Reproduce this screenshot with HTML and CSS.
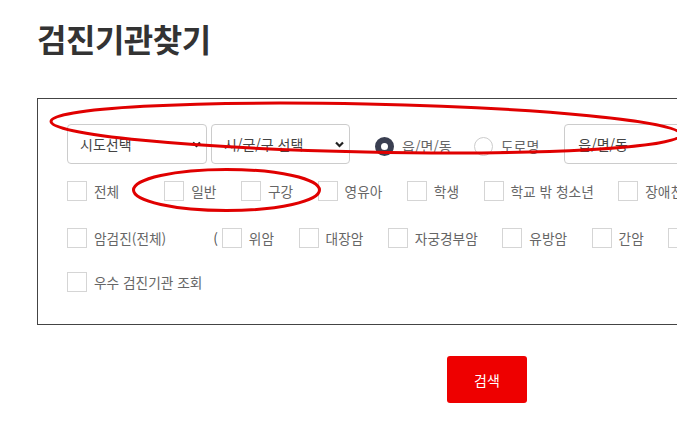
FILE: index.html
```html
<!DOCTYPE html>
<html lang="ko">
<head>
    <meta charset="UTF-8">
    <meta name="viewport" content="width=device-width, initial-scale=1.0">
    <title>검진기관찾기</title>
    <link rel="stylesheet" href="styles.css">
</head>
<body>
    <div class="page">
        <h2 class="page-title">검진기관찾기</h2>

        <div class="search-box">
            <div class="addr-row">
                <select class="addr-select">
                    <option>시도선택</option>
                </select>
                <select class="addr-select">
                    <option>시/군/구 선택</option>
                </select>
                <label class="radio-item">
                    <input type="radio" name="addrType" checked>
                    <span class="radio-mark"></span>
                    읍/면/동
                </label>
                <label class="radio-item">
                    <input type="radio" name="addrType">
                    <span class="radio-mark"></span>
                    도로명
                </label>
                <input type="text" class="addr-input" placeholder="읍/면/동">
            </div>

            <div class="check-row">
                <label class="check-item first"><span class="box"></span>전체</label>
                <label class="check-item"><span class="box"></span>일반</label>
                <label class="check-item"><span class="box"></span>구강</label>
                <label class="check-item"><span class="box"></span>영유아</label>
                <label class="check-item"><span class="box"></span>학생</label>
                <label class="check-item"><span class="box"></span>학교 밖 청소년</label>
                <label class="check-item"><span class="box"></span>장애친화</label>
            </div>

            <div class="check-row">
                <label class="check-item first cancer"><span class="box"></span>암검진(전체)</label>
                <span class="paren">(</span>
                <label class="check-item"><span class="box"></span>위암</label>
                <label class="check-item"><span class="box"></span>대장암</label>
                <label class="check-item"><span class="box"></span>자궁경부암</label>
                <label class="check-item"><span class="box"></span>유방암</label>
                <label class="check-item"><span class="box"></span>간암</label>
                <label class="check-item"><span class="box"></span>폐암</label>
            </div>

            <div class="check-row">
                <label class="check-item"><span class="box"></span>우수 검진기관 조회</label>
            </div>
        </div>

        <div class="btn-container">
            <button class="btn-search">검색</button>
        </div>
    </div>

    <!-- red marks drawn over the screenshot -->
    <svg class="marks" width="677" height="424" viewBox="0 0 677 424">
        <ellipse cx="366" cy="128" rx="315" ry="24" transform="rotate(1.2 366 128)" />
        <ellipse cx="226.5" cy="190" rx="93" ry="20.5" />
    </svg>
</body>
</html>
```

FILE: styles.css
```css
/* Base Styling */
html, body {
    margin: 0;
    padding: 0;
    overflow: hidden;
}

body {
    font-family: "Noto Sans CJK KR", "Noto Sans", sans-serif;
    background-color: #fff;
    color: #555;
    width: 677px;
    height: 424px;
    position: relative;
}

.page {
    width: 900px;
    padding-left: 37px;
}

.page-title {
    margin: 0;
    padding-top: 17px;
    height: 98px;
    box-sizing: border-box;
    font-size: 32px;
    font-weight: bold;
    line-height: 42px;
    color: #333;
    letter-spacing: -0.5px;
}

.search-box {
    border: 1px solid #444;
    padding: 25px 30px 32px 29px;
    height: 227px;
    box-sizing: border-box;
}

/* address row */
.addr-row {
    display: flex;
    align-items: center;
    height: 40px;
    white-space: nowrap;
}

.addr-select {
    appearance: none;
    width: 140px;
    height: 40px;
    margin-right: 4px;
    padding: 0 12px;
    border: 1px solid #ccc;
    border-radius: 4px;
    background-color: #fff;
    background-image: url("data:image/svg+xml;utf8,<svg xmlns='http://www.w3.org/2000/svg' width='9' height='7' viewBox='0 0 9 7'><path d='M1 1.5 4.5 5 8 1.5' fill='none' stroke='%23222' stroke-width='2.2'/></svg>");
    background-repeat: no-repeat;
    background-position: right 5px center;
    font-family: inherit;
    font-size: 14px;
    color: #444;
}

.addr-select + .addr-select {
    width: 139px;
    margin-right: 25px;
}

.radio-item {
    display: flex;
    align-items: center;
    margin-right: 22px;
    font-size: 14px;
    color: #666;
    position: relative;
    top: 2px;
}

.radio-item input {
    display: none;
}

.radio-mark {
    width: 19px;
    height: 19px;
    box-sizing: border-box;
    border: 1px solid #ccc;
    border-radius: 50%;
    margin-right: 8px;
}

.radio-item input:checked + .radio-mark {
    border: 6px solid #3a3f51;
}

.addr-input {
    width: 160px;
    height: 40px;
    box-sizing: border-box;
    margin-left: 3px;
    padding: 0 13px;
    border: 1px solid #ccc;
    border-radius: 4px;
    font-family: inherit;
    font-size: 14px;
}

.addr-input::placeholder {
    color: #444;
}

/* checkbox rows */
.check-row {
    display: flex;
    align-items: center;
    height: 20px;
    margin-top: 17px;
    white-space: nowrap;
    font-size: 13.7px;
    color: #666;
}

.check-row + .check-row {
    margin-top: 27px;
}

.check-row:last-child {
    margin-top: 24px;
}

.check-item {
    display: flex;
    align-items: center;
    margin-right: 24.5px;
}

.check-item.first {
    margin-right: 45px;
}

.check-item.cancer {
    margin-right: 47px;
}

.box {
    width: 20px;
    height: 20px;
    box-sizing: border-box;
    border: 1px solid #d5d5d5;
    margin-right: 7px;
    flex-shrink: 0;
}

.paren {
    margin-right: 4px;
    color: #555;
}

.btn-container {
    display: flex;
    justify-content: center;
    margin-top: 31px;
}

.btn-search {
    width: 80px;
    height: 47px;
    border: none;
    border-radius: 3px;
    background-color: #ee0000;
    color: #fff;
    font-family: inherit;
    font-size: 14px;
    cursor: pointer;
}

/* annotation marks */
.marks {
    position: absolute;
    left: 0;
    top: 0;
    pointer-events: none;
}

.marks ellipse {
    fill: none;
    stroke: #e00000;
    stroke-width: 3;
}
```
